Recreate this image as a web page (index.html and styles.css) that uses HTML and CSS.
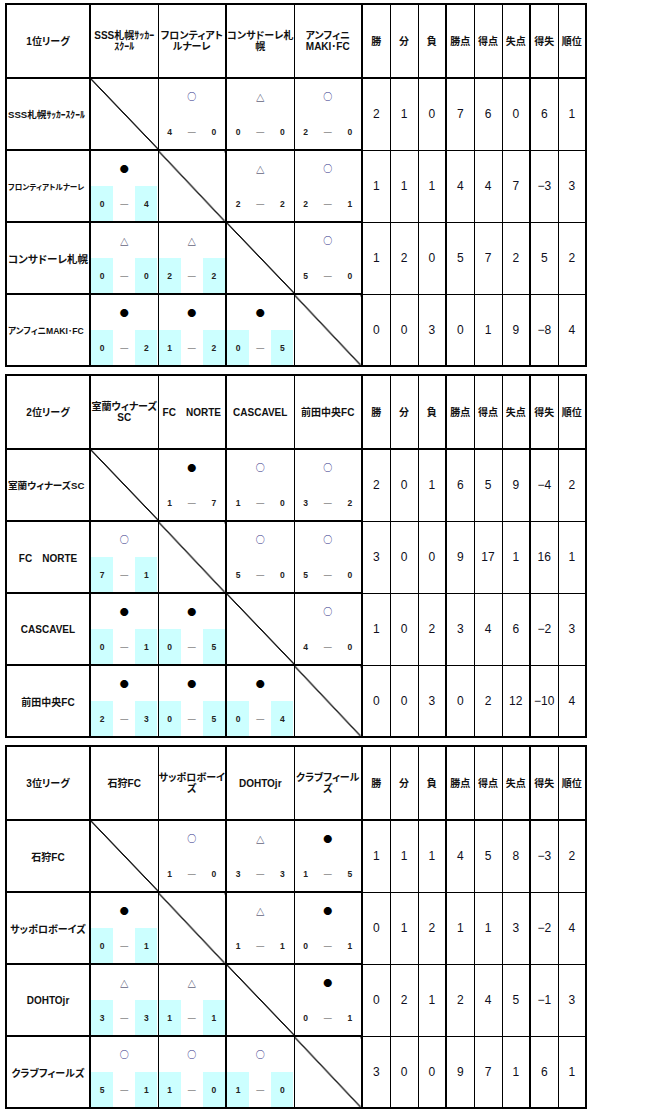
FILE: index.html
```html
<!DOCTYPE html>
<html lang="ja">
<head>
<meta charset="utf-8">
<title>リーグ戦績表</title>
<link rel="stylesheet" href="styles.css">
</head>
<body>
<div class="sheet">

<table class="league">
  <colgroup>
    <col class="c-label"><col class="c-team"><col class="c-team"><col class="c-team"><col class="c-team">
    <col class="c-stat"><col class="c-stat"><col class="c-stat"><col class="c-stat"><col class="c-stat"><col class="c-stat"><col class="c-stat"><col class="c-stat">
  </colgroup>
  <thead>
    <tr>
      <th class="lbl">1位リーグ</th>
      <th class="tm">SSS札幌ｻｯｶｰ<br>ｽｸｰﾙ</th>
      <th class="tm">フロンティアト<br>ルナーレ</th>
      <th class="tm">コンサドーレ札<br>幌</th>
      <th class="tm">アンフィニ<br>MAKI･FC</th>
      <th class="st">勝</th><th class="st">分</th><th class="st">負</th><th class="st">勝点</th><th class="st">得点</th><th class="st">失点</th><th class="st">得失</th><th class="st">順位</th>
    </tr>
  </thead>
  <tbody>
    <tr>
      <th class="lbl fit1">SSS札幌ｻｯｶｰｽｸｰﾙ</th>
      <td class="diag"></td>
      <td class="m"><div class="mg"><span class="sym win">○</span><span class="s">4</span><span class="d">—</span><span class="s">0</span></div></td>
      <td class="m"><div class="mg"><span class="sym draw">△</span><span class="s">0</span><span class="d">—</span><span class="s">0</span></div></td>
      <td class="m"><div class="mg"><span class="sym win">○</span><span class="s">2</span><span class="d">—</span><span class="s">0</span></div></td>
      <td class="n">2</td><td class="n">1</td><td class="n">0</td><td class="n">7</td><td class="n">6</td><td class="n">0</td><td class="n">6</td><td class="n">1</td>
    </tr>
    <tr>
      <th class="lbl fit2">フロンティアトルナーレ</th>
      <td class="m"><div class="mg away"><span class="sym loss">●</span><span class="s">0</span><span class="d">—</span><span class="s">4</span></div></td>
      <td class="diag"></td>
      <td class="m"><div class="mg"><span class="sym draw">△</span><span class="s">2</span><span class="d">—</span><span class="s">2</span></div></td>
      <td class="m"><div class="mg"><span class="sym win">○</span><span class="s">2</span><span class="d">—</span><span class="s">1</span></div></td>
      <td class="n">1</td><td class="n">1</td><td class="n">1</td><td class="n">4</td><td class="n">4</td><td class="n">7</td><td class="n">−3</td><td class="n">3</td>
    </tr>
    <tr>
      <th class="lbl big">コンサドーレ札幌</th>
      <td class="m"><div class="mg away"><span class="sym draw">△</span><span class="s">0</span><span class="d">—</span><span class="s">0</span></div></td>
      <td class="m"><div class="mg away"><span class="sym draw">△</span><span class="s">2</span><span class="d">—</span><span class="s">2</span></div></td>
      <td class="diag"></td>
      <td class="m"><div class="mg"><span class="sym win">○</span><span class="s">5</span><span class="d">—</span><span class="s">0</span></div></td>
      <td class="n">1</td><td class="n">2</td><td class="n">0</td><td class="n">5</td><td class="n">7</td><td class="n">2</td><td class="n">5</td><td class="n">2</td>
    </tr>
    <tr>
      <th class="lbl fit3">アンフィニMAKI･FC</th>
      <td class="m"><div class="mg away"><span class="sym loss">●</span><span class="s">0</span><span class="d">—</span><span class="s">2</span></div></td>
      <td class="m"><div class="mg away"><span class="sym loss">●</span><span class="s">1</span><span class="d">—</span><span class="s">2</span></div></td>
      <td class="m"><div class="mg away"><span class="sym loss">●</span><span class="s">0</span><span class="d">—</span><span class="s">5</span></div></td>
      <td class="diag"></td>
      <td class="n">0</td><td class="n">0</td><td class="n">3</td><td class="n">0</td><td class="n">1</td><td class="n">9</td><td class="n">−8</td><td class="n">4</td>
    </tr>
  </tbody>
</table>

<table class="league">
  <colgroup>
    <col class="c-label"><col class="c-team"><col class="c-team"><col class="c-team"><col class="c-team">
    <col class="c-stat"><col class="c-stat"><col class="c-stat"><col class="c-stat"><col class="c-stat"><col class="c-stat"><col class="c-stat"><col class="c-stat">
  </colgroup>
  <thead>
    <tr>
      <th class="lbl">2位リーグ</th>
      <th class="tm">室蘭ウィナーズ<br>SC</th>
      <th class="tm">FC　NORTE</th>
      <th class="tm">CASCAVEL</th>
      <th class="tm">前田中央FC</th>
      <th class="st">勝</th><th class="st">分</th><th class="st">負</th><th class="st">勝点</th><th class="st">得点</th><th class="st">失点</th><th class="st">得失</th><th class="st">順位</th>
    </tr>
  </thead>
  <tbody>
    <tr>
      <th class="lbl fit4">室蘭ウィナーズSC</th>
      <td class="diag"></td>
      <td class="m"><div class="mg"><span class="sym loss">●</span><span class="s">1</span><span class="d">—</span><span class="s">7</span></div></td>
      <td class="m"><div class="mg"><span class="sym win">○</span><span class="s">1</span><span class="d">—</span><span class="s">0</span></div></td>
      <td class="m"><div class="mg"><span class="sym win">○</span><span class="s">3</span><span class="d">—</span><span class="s">2</span></div></td>
      <td class="n">2</td><td class="n">0</td><td class="n">1</td><td class="n">6</td><td class="n">5</td><td class="n">9</td><td class="n">−4</td><td class="n">2</td>
    </tr>
    <tr>
      <th class="lbl">FC　NORTE</th>
      <td class="m"><div class="mg away"><span class="sym win">○</span><span class="s">7</span><span class="d">—</span><span class="s">1</span></div></td>
      <td class="diag"></td>
      <td class="m"><div class="mg"><span class="sym win">○</span><span class="s">5</span><span class="d">—</span><span class="s">0</span></div></td>
      <td class="m"><div class="mg"><span class="sym win">○</span><span class="s">5</span><span class="d">—</span><span class="s">0</span></div></td>
      <td class="n">3</td><td class="n">0</td><td class="n">0</td><td class="n">9</td><td class="n">17</td><td class="n">1</td><td class="n">16</td><td class="n">1</td>
    </tr>
    <tr>
      <th class="lbl">CASCAVEL</th>
      <td class="m"><div class="mg away"><span class="sym loss">●</span><span class="s">0</span><span class="d">—</span><span class="s">1</span></div></td>
      <td class="m"><div class="mg away"><span class="sym loss">●</span><span class="s">0</span><span class="d">—</span><span class="s">5</span></div></td>
      <td class="diag"></td>
      <td class="m"><div class="mg"><span class="sym win">○</span><span class="s">4</span><span class="d">—</span><span class="s">0</span></div></td>
      <td class="n">1</td><td class="n">0</td><td class="n">2</td><td class="n">3</td><td class="n">4</td><td class="n">6</td><td class="n">−2</td><td class="n">3</td>
    </tr>
    <tr>
      <th class="lbl">前田中央FC</th>
      <td class="m"><div class="mg away"><span class="sym loss">●</span><span class="s">2</span><span class="d">—</span><span class="s">3</span></div></td>
      <td class="m"><div class="mg away"><span class="sym loss">●</span><span class="s">0</span><span class="d">—</span><span class="s">5</span></div></td>
      <td class="m"><div class="mg away"><span class="sym loss">●</span><span class="s">0</span><span class="d">—</span><span class="s">4</span></div></td>
      <td class="diag"></td>
      <td class="n">0</td><td class="n">0</td><td class="n">3</td><td class="n">0</td><td class="n">2</td><td class="n">12</td><td class="n">−10</td><td class="n">4</td>
    </tr>
  </tbody>
</table>

<table class="league">
  <colgroup>
    <col class="c-label"><col class="c-team"><col class="c-team"><col class="c-team"><col class="c-team">
    <col class="c-stat"><col class="c-stat"><col class="c-stat"><col class="c-stat"><col class="c-stat"><col class="c-stat"><col class="c-stat"><col class="c-stat">
  </colgroup>
  <thead>
    <tr>
      <th class="lbl">3位リーグ</th>
      <th class="tm">石狩FC</th>
      <th class="tm">サッポロボーイ<br>ズ</th>
      <th class="tm">DOHTOjr</th>
      <th class="tm">クラブフィール<br>ズ</th>
      <th class="st">勝</th><th class="st">分</th><th class="st">負</th><th class="st">勝点</th><th class="st">得点</th><th class="st">失点</th><th class="st">得失</th><th class="st">順位</th>
    </tr>
  </thead>
  <tbody>
    <tr>
      <th class="lbl">石狩FC</th>
      <td class="diag"></td>
      <td class="m"><div class="mg"><span class="sym win">○</span><span class="s">1</span><span class="d">—</span><span class="s">0</span></div></td>
      <td class="m"><div class="mg"><span class="sym draw">△</span><span class="s">3</span><span class="d">—</span><span class="s">3</span></div></td>
      <td class="m"><div class="mg"><span class="sym loss">●</span><span class="s">1</span><span class="d">—</span><span class="s">5</span></div></td>
      <td class="n">1</td><td class="n">1</td><td class="n">1</td><td class="n">4</td><td class="n">5</td><td class="n">8</td><td class="n">−3</td><td class="n">2</td>
    </tr>
    <tr>
      <th class="lbl">サッポロボーイズ</th>
      <td class="m"><div class="mg away"><span class="sym loss">●</span><span class="s">0</span><span class="d">—</span><span class="s">1</span></div></td>
      <td class="diag"></td>
      <td class="m"><div class="mg"><span class="sym draw">△</span><span class="s">1</span><span class="d">—</span><span class="s">1</span></div></td>
      <td class="m"><div class="mg"><span class="sym loss">●</span><span class="s">0</span><span class="d">—</span><span class="s">1</span></div></td>
      <td class="n">0</td><td class="n">1</td><td class="n">2</td><td class="n">1</td><td class="n">1</td><td class="n">3</td><td class="n">−2</td><td class="n">4</td>
    </tr>
    <tr>
      <th class="lbl">DOHTOjr</th>
      <td class="m"><div class="mg away"><span class="sym draw">△</span><span class="s">3</span><span class="d">—</span><span class="s">3</span></div></td>
      <td class="m"><div class="mg away"><span class="sym draw">△</span><span class="s">1</span><span class="d">—</span><span class="s">1</span></div></td>
      <td class="diag"></td>
      <td class="m"><div class="mg"><span class="sym loss">●</span><span class="s">0</span><span class="d">—</span><span class="s">1</span></div></td>
      <td class="n">0</td><td class="n">2</td><td class="n">1</td><td class="n">2</td><td class="n">4</td><td class="n">5</td><td class="n">−1</td><td class="n">3</td>
    </tr>
    <tr>
      <th class="lbl">クラブフィールズ</th>
      <td class="m"><div class="mg away"><span class="sym win">○</span><span class="s">5</span><span class="d">—</span><span class="s">1</span></div></td>
      <td class="m"><div class="mg away"><span class="sym win">○</span><span class="s">1</span><span class="d">—</span><span class="s">0</span></div></td>
      <td class="m"><div class="mg away"><span class="sym win">○</span><span class="s">1</span><span class="d">—</span><span class="s">0</span></div></td>
      <td class="diag"></td>
      <td class="n">3</td><td class="n">0</td><td class="n">0</td><td class="n">9</td><td class="n">7</td><td class="n">1</td><td class="n">6</td><td class="n">1</td>
    </tr>
  </tbody>
</table>

</div>
</body>
</html>
```

FILE: styles.css
```css
html, body {
  margin: 0;
  padding: 0;
  background: #fff;
}

body {
  font-family: "Liberation Sans", "Noto Sans CJK JP", sans-serif;
  color: #111;
}

.sheet {
  display: flex;
  flex-direction: column;
  align-items: flex-start;
  gap: 7px;
  padding: 3px 0 0 5px;
}

.league {
  border-collapse: collapse;
  table-layout: fixed;
  width: 580px;
  border: 2px solid #000;
}

.c-label { width: 84px; }
.c-team { width: 68px; }
.c-stat { width: 28px; }

.league th,
.league td {
  border: 1px solid #000;
  padding: 0;
  text-align: center;
  vertical-align: middle;
  font-feature-settings: "palt";
}

.league thead tr { height: 74px; }
.league tbody tr { height: 72px; }

.league thead th {
  border-bottom: 2px solid #000;
  font-size: 10px;
  font-weight: bold;
  line-height: 11px;
}

/* group separators */
.league tr > :nth-child(1) { border-right: 2px solid #000; }
.league tr > :nth-child(3) { border-right: 2px solid #000; }
.league tr > :nth-child(5) { border-right: 2px solid #000; }
.league tr > :nth-child(8) { border-right: 2px solid #000; }
.league tr > :nth-child(11) { border-right: 2px solid #000; }

.league tbody .lbl,
.league tbody .m,
.league tbody .diag {
  border-bottom: 2px solid #000;
}

.lbl {
  font-size: 10px;
  font-weight: bold;
  white-space: nowrap;
  overflow: hidden;
}

.lbl.fit1 { font-size: 9.6px; text-align: left; padding-left: 1px; }
.lbl.fit2 { font-size: 7.6px; text-align: left; padding-left: 1px; }
.lbl.fit3 { font-size: 8.6px; text-align: left; padding-left: 1px; }
.lbl.fit4 { font-size: 9.6px; text-align: left; padding-left: 1px; }
.lbl.big { font-size: 10.5px; }

.tm { font-size: 10px; }

.diag {
  background-image: linear-gradient(to top right,
    transparent calc(50% - 1px),
    #222 calc(50% - 0.4px),
    #222 calc(50% + 0.4px),
    transparent calc(50% + 1px));
}

.mg {
  display: grid;
  grid-template-columns: repeat(3, 1fr);
  grid-template-rows: repeat(2, 1fr);
  height: 70px;
}

.mg > span {
  display: flex;
  align-items: center;
  justify-content: center;
}

.sym {
  grid-column: 2;
  grid-row: 1;
  font-family: "Noto Sans CJK JP", sans-serif;
  font-size: 9px;
  font-weight: bold;
}

.sym.win { color: #2e2e86; }
.sym.draw { color: #111140; font-size: 8.5px; }
.sym.loss { color: #000; font-weight: normal; }

.s,
.d {
  grid-row: 2;
  font-size: 8.5px;
  font-weight: bold;
  color: #222;
}

.d {
  font-weight: normal;
  color: #444;
  font-size: 8px;
}

.mg.away .s { background: #ccffff; }

.n {
  font-size: 12px;
  color: #0e0e20;
}
```
